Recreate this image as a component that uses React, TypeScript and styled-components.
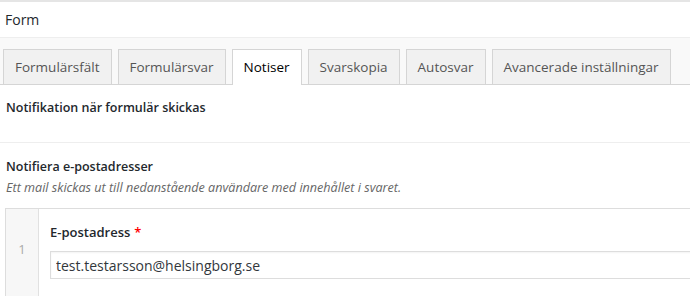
import { type FC } from "react";
import styled, { createGlobalStyle } from "styled-components";

const GlobalStyle = createGlobalStyle`
  html, body {
    margin: 0;
    padding: 0;
    background: #ffffff;
    overflow: hidden;
  }
  body {
    font-family: "Open Sans", "Noto Sans", sans-serif;
    color: #23282d;
  }
`;

const Page = styled.div`
  width: 690px;
  height: 294px;
  border-top: 2px solid #e5e5e5;
  overflow: hidden;
`;

const Header = styled.div`
  height: 35px;
  padding: 0 5px;
  display: flex;
  align-items: center;
  font-size: 14px;
  color: #23282d;
  border-bottom: 1px solid #eeeeee;
`;

const TabBar = styled.div`
  display: flex;
  gap: 6px;
  padding: 11px 0 0 3px;
  background: #f9f9f9;
  border-bottom: 1px solid #d5d5d5;
`;

const Tab = styled.div<{ $active?: boolean }>`
  box-sizing: border-box;
  height: ${(p) => (p.$active ? "36px" : "35px")};
  margin-bottom: ${(p) => (p.$active ? "-1px" : "0")};
  padding: 0 11px 1px;
  display: flex;
  align-items: center;
  font-size: 13.5px;
  white-space: nowrap;
  border: 1px solid #d5d5d5;
  border-bottom: none;
  background: ${(p) => (p.$active ? "#ffffff" : "#f1f1f1")};
  color: ${(p) => (p.$active ? "#000000" : "#555555")};
`;

const Section = styled.div<{ $divider?: boolean }>`
  padding: ${(p) => (p.$divider ? "14px 6px 25px" : "15px 6px 0")};
  border-bottom: ${(p) => (p.$divider ? "1px solid #eeeeee" : "none")};
`;

const Title = styled.div`
  font-size: 12.5px;
  font-weight: 600;
  line-height: 18px;
  color: #23282d;
`;

const Description = styled.div`
  margin-top: 3px;
  font-size: 12.6px;
  font-style: italic;
  line-height: 18px;
  color: #666666;
`;

const Repeater = styled.div`
  margin: 11px -40px 0 -1px;
  border: 1px solid #dddddd;
  display: flex;
  height: 120px;
`;

const RowHandle = styled.div`
  width: 33px;
  flex: none;
  background: #f7f7f7;
  border-right: 1px solid #e1e1e1;
  display: flex;
  justify-content: center;
  padding-top: 31px;
  font-size: 13px;
  color: #aaaaaa;
  box-sizing: border-box;
`;

const FieldCell = styled.div`
  flex: 1;
  padding: 14px 11px;
`;

const Label = styled.label`
  display: block;
  font-size: 13px;
  font-weight: 600;
  line-height: 18px;
  color: #23282d;
`;

const Required = styled.span`
  color: #f00;
  margin-left: 4px;
`;

const Input = styled.input`
  display: block;
  width: 100%;
  box-sizing: border-box;
  margin-top: 10px;
  height: 28px;
  padding: 0 5px;
  border: 1px solid #dddddd;
  box-shadow: inset 0 1px 2px rgba(0, 0, 0, 0.05);
  font-family: inherit;
  font-size: 14px;
  color: #32373c;
  background: #ffffff;
  outline: none;
`;

const tabs = [
  "Formulärsfält",
  "Formulärsvar",
  "Notiser",
  "Svarskopia",
  "Autosvar",
  "Avancerade inställningar",
];

const App: FC = () => {
  return (
    <Page>
      <GlobalStyle />
      <Header>Form</Header>

      <TabBar>
        {tabs.map((t) => (
          <Tab key={t} $active={t === "Notiser"}>
            {t}
          </Tab>
        ))}
      </TabBar>

      <Section $divider>
        <Title>Notifikation när formulär skickas</Title>
      </Section>

      <Section>
        <Title>Notifiera e-postadresser</Title>
        <Description>
          Ett mail skickas ut till nedanstående användare med innehållet i svaret.
        </Description>

        <Repeater>
          <RowHandle>1</RowHandle>
          <FieldCell>
            <Label>
              E-postadress<Required>*</Required>
            </Label>
            <Input readOnly value="test.testarsson@helsingborg.se" />
          </FieldCell>
        </Repeater>
      </Section>
    </Page>
  );
};

export default App;
